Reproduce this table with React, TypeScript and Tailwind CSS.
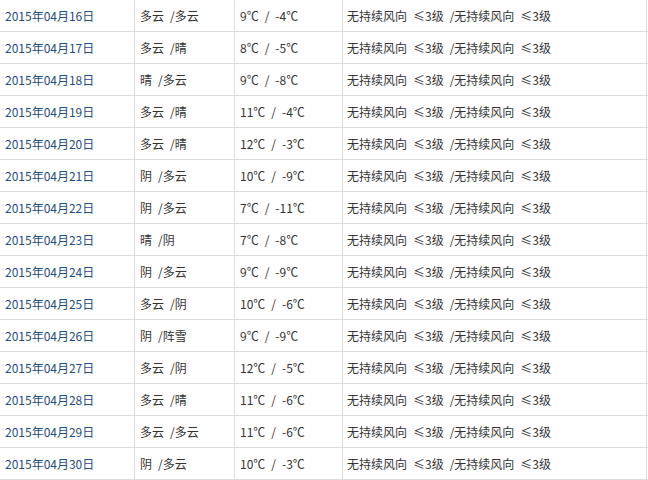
// App.tsx — weather history table

const rows: [string, string, string, string][] = [
  ["2015年04月16日", "多云 /多云", "9℃ / -4℃", "无持续风向 ≤3级 /无持续风向 ≤3级"],
  ["2015年04月17日", "多云 /晴", "8℃ / -5℃", "无持续风向 ≤3级 /无持续风向 ≤3级"],
  ["2015年04月18日", "晴 /多云", "9℃ / -8℃", "无持续风向 ≤3级 /无持续风向 ≤3级"],
  ["2015年04月19日", "多云 /晴", "11℃ / -4℃", "无持续风向 ≤3级 /无持续风向 ≤3级"],
  ["2015年04月20日", "多云 /晴", "12℃ / -3℃", "无持续风向 ≤3级 /无持续风向 ≤3级"],
  ["2015年04月21日", "阴 /多云", "10℃ / -9℃", "无持续风向 ≤3级 /无持续风向 ≤3级"],
  ["2015年04月22日", "阴 /多云", "7℃ / -11℃", "无持续风向 ≤3级 /无持续风向 ≤3级"],
  ["2015年04月23日", "晴 /阴", "7℃ / -8℃", "无持续风向 ≤3级 /无持续风向 ≤3级"],
  ["2015年04月24日", "阴 /多云", "9℃ / -9℃", "无持续风向 ≤3级 /无持续风向 ≤3级"],
  ["2015年04月25日", "多云 /阴", "10℃ / -6℃", "无持续风向 ≤3级 /无持续风向 ≤3级"],
  ["2015年04月26日", "阴 /阵雪", "9℃ / -9℃", "无持续风向 ≤3级 /无持续风向 ≤3级"],
  ["2015年04月27日", "多云 /阴", "12℃ / -5℃", "无持续风向 ≤3级 /无持续风向 ≤3级"],
  ["2015年04月28日", "多云 /晴", "11℃ / -6℃", "无持续风向 ≤3级 /无持续风向 ≤3级"],
  ["2015年04月29日", "多云 /多云", "11℃ / -6℃", "无持续风向 ≤3级 /无持续风向 ≤3级"],
  ["2015年04月30日", "阴 /多云", "10℃ / -3℃", "无持续风向 ≤3级 /无持续风向 ≤3级"],
];

// the old page uses a 6px (half-width) space
const sp = (s: string) => s.split(" ").join("\u2002");

function Row({ date, weather, temp, wind }: { date: string; weather: string; temp: string; wind: string }) {
  return (
    <div className="flex h-[32px] border-b border-[#dcdcdc]">
      <div className="w-[135px] flex items-center pl-[5px] border-r border-[#dcdcdc] text-[#1e4c7c]">
        {date}
      </div>
      <div className="w-[100px] flex items-center pl-[5px] border-r border-[#dcdcdc] whitespace-pre">{sp(weather)}</div>
      <div className="w-[108px] flex items-center pl-[5px] border-r border-[#dcdcdc] whitespace-pre">{sp(temp)}</div>
      <div className="w-[304px] flex items-center pl-[4px] border-r border-[#dcdcdc] whitespace-pre">{sp(wind)}</div>
    </div>
  );
}

export default function App() {
  return (
    <div className="w-[648px] h-[480px] overflow-hidden bg-white text-[12px] leading-none text-[#333] font-['Noto_Sans_CJK_SC','Liberation_Sans',sans-serif]">
      {rows.map(([d, w, t, wi]) => (
        <Row key={d} date={d} weather={w} temp={t} wind={wi} />
      ))}
    </div>
  );
}
